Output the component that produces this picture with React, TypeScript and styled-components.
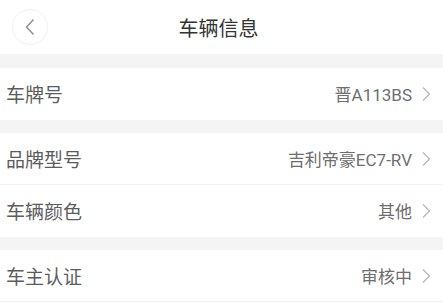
import React from 'react'
import styled, { createGlobalStyle } from 'styled-components'

const GlobalStyle = createGlobalStyle`
  html, body {
    margin: 0;
    padding: 0;
    background: #ffffff;
  }
  body {
    font-family: Roboto, "Noto Sans CJK SC", "Liberation Sans", sans-serif;
  }
`

const Page = styled.div`
  width: 443px;
  background: #f4f4f4;
  display: flex;
  flex-direction: column;
`

const Header = styled.div`
  height: 54px;
  background: #ffffff;
  display: grid;
  grid-template-columns: 60px 1fr 60px;
  align-items: center;
`

const BackButton = styled.div`
  width: 34px;
  height: 34px;
  margin-left: 12px;
  margin-top: -1px;
  border-radius: 50%;
  border: 1px solid #efefef;
  display: flex;
  align-items: center;
  justify-content: center;
`

const Title = styled.div`
  text-align: center;
  font-size: 20px;
  color: #333333;
  margin-left: -6px;
`

const Group = styled.div`
  margin-top: ${({ $gap }: { $gap: number }) => $gap}px;
  background: #ffffff;
`

const Row = styled.div`
  height: 52px;
  display: flex;
  align-items: center;
  padding: 0 12px 0 6px;
  border-bottom: 1px solid ${({ $line }: { $line?: boolean }) => ($line ? '#f1f1f1' : 'transparent')};
  box-sizing: border-box;
`

const Label = styled.span`
  flex: 1;
  font-size: 19px;
  color: #5c5c5c;
`

const Value = styled.span`
  font-size: 17px;
  color: #6e6e6e;
  margin-right: 9px;
`

const Chevron = () => (
  <svg width="10" height="16" viewBox="0 0 10 16">
    <path d="M2 1.5 L8.5 8 L2 14.5" fill="none" stroke="#b8b8b8" strokeWidth="1.3" />
  </svg>
)

const BackIcon = () => (
  <svg width="12" height="18" viewBox="0 0 12 18">
    <path d="M9.5 1.5 L2.5 9 L9.5 16.5" fill="none" stroke="#8c8c8c" strokeWidth="1.4" />
  </svg>
)

type Item = { label: string; value: string }

const groups: { gap: number; items: Item[] }[] = [
  { gap: 14, items: [{ label: '车牌号', value: '晋A113BS' }] },
  {
    gap: 13,
    items: [
      { label: '品牌型号', value: '吉利帝豪EC7-RV' },
      { label: '车辆颜色', value: '其他' },
    ],
  },
  { gap: 13, items: [{ label: '车主认证', value: '审核中' }] },
]

export default function App() {
  return (
    <>
      <GlobalStyle />
      <Page>
        <Header>
          <BackButton>
            <BackIcon />
          </BackButton>
          <Title>车辆信息</Title>
          <div />
        </Header>
        {groups.map((g, gi) => (
          <Group key={gi} $gap={g.gap}>
            {g.items.map((it, i) => (
              <Row key={it.label} $line={i < g.items.length - 1 || gi === groups.length - 1}>
                <Label>{it.label}</Label>
                <Value>{it.value}</Value>
                <Chevron />
              </Row>
            ))}
          </Group>
        ))}
      </Page>
    </>
  )
}
